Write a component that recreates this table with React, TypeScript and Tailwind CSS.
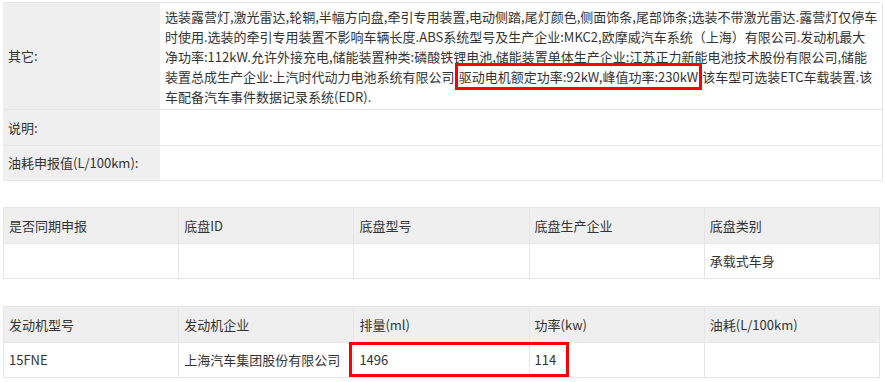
const FONT = '"Microsoft YaHei", "Noto Sans CJK SC", "Noto Sans", sans-serif'

const OTHER_LINES = [
  '选装露营灯,激光雷达,轮辋,半幅方向盘,牵引专用装置,电动侧踏,尾灯颜色,侧面饰条,尾部饰条;选装不带激光雷达.露营灯仅停车',
  '时使用.选装的牵引专用装置不影响车辆长度.ABS系统型号及生产企业:MKC2,欧摩威汽车系统（上海）有限公司.发动机最大',
  '净功率:112kW.允许外接充电,储能装置种类:磷酸铁锂电池,储能装置单体生产企业:江苏正力新能电池技术股份有限公司,储能',
]

const CHASSIS_HEAD = ['是否同期申报', '底盘ID', '底盘型号', '底盘生产企业', '底盘类别']
const CHASSIS_ROW = ['', '', '', '', '承载式车身']

const ENGINE_HEAD = ['发动机型号', '发动机企业', '排量(ml)', '功率(kw)', '油耗(L/100km)']
const ENGINE_ROW = ['15FNE', '上海汽车集团股份有限公司', '1496', '114', '']

function GridTable({ head, row }: { head: string[]; row: string[] }) {
  return (
    <div className="grid grid-cols-5 border-t border-l border-[#e6e6e6]">
      {head.map((h) => (
        <div
          key={h}
          className="flex h-[36px] items-center border-r border-b border-[#e6e6e6] bg-[#efefef] px-[5px]"
        >
          {h}
        </div>
      ))}
      {row.map((c, i) => (
        <div
          key={i}
          className="flex h-[35px] items-center border-r border-b border-[#e6e6e6] bg-white px-[5px]"
        >
          {c}
        </div>
      ))}
    </div>
  )
}

export default function App() {
  return (
    <div
      className="h-[382px] w-[885px] overflow-hidden bg-white pt-[2px] pl-[3px] text-[13px] text-[#333]"
      style={{ fontFamily: FONT }}
    >
      <div className="w-[877px]">
        <div className="grid grid-cols-[157px_1fr] border-t border-[#e6e6e6]">
          <div className="flex h-[107px] items-center border-b border-[#e6e6e6] bg-[#efefef] px-[5px]">
            其它:
          </div>
          <div className="h-[107px] border-r border-b border-[#e6e6e6] px-[5px] pt-[4px] leading-[20px] whitespace-nowrap">
            {OTHER_LINES.map((l) => (
              <div key={l}>{l}</div>
            ))}
            <div>
              装置总成生产企业:上汽时代动力电池系统有限公司
              <span className="border-[3px] border-[#f00] px-[1px] py-[1px]">驱动电机额定功率:92kW,峰值功率:230kW</span>
              该车型可选装ETC车载装置.该
            </div>
            <div>车配备汽车事件数据记录系统(EDR).</div>
          </div>
          <div className="flex h-[36px] items-center border-b border-[#e6e6e6] bg-[#efefef] px-[5px]">说明:</div>
          <div className="h-[36px] border-r border-b border-[#e6e6e6]" />
          <div className="flex h-[35px] items-center border-b border-[#e6e6e6] bg-[#efefef] px-[5px]">
            油耗申报值(L/100km):
          </div>
          <div className="h-[35px] border-r border-b border-[#e6e6e6]" />
        </div>

        <div className="mt-[26px]">
          <GridTable head={CHASSIS_HEAD} row={CHASSIS_ROW} />
        </div>

        <div className="relative mt-[27px]">
          <GridTable head={ENGINE_HEAD} row={ENGINE_ROW} />
          <div className="absolute top-[36px] left-[346px] h-[35px] w-[220px] border-[3px] border-[#f00]" />
        </div>
      </div>
    </div>
  )
}
